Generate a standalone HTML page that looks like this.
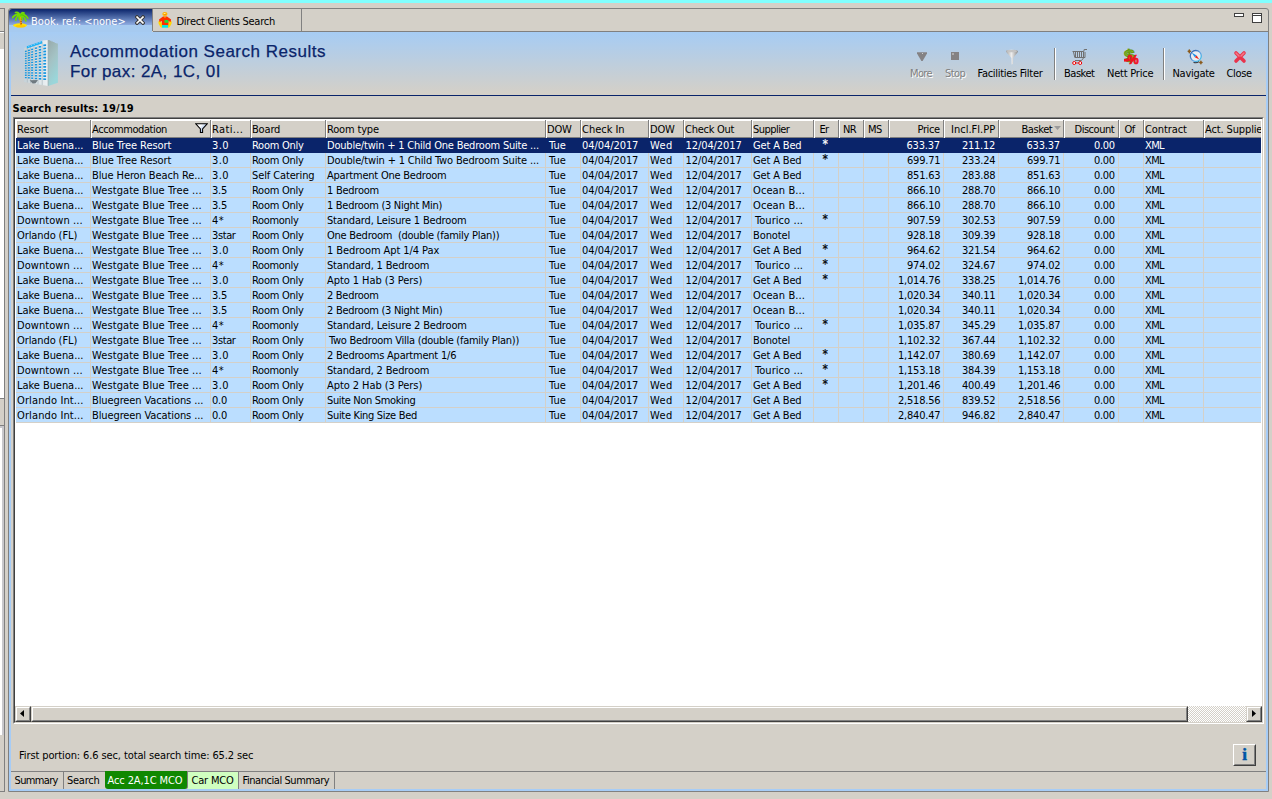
<!DOCTYPE html>
<html><head><meta charset="utf-8"><title>Accommodation Search Results</title>
<style>
*{box-sizing:border-box;margin:0;padding:0}
html,body{width:1272px;height:799px;overflow:hidden;background:#D4D0C8}
body{position:relative;font-family:"DejaVu Sans Condensed","Liberation Sans",sans-serif;font-size:11px;letter-spacing:-0.22px;color:#000;line-height:13px}
.a{position:absolute}
span.a{white-space:nowrap}
#cyan{left:0;top:0;width:1272px;height:3px;background:#80FFFF}
/* left strip */
#ls1{left:0;top:8px;width:5px;height:1px;background:#808080}
#ls2{left:4px;top:8px;width:1px;height:784px;background:#808080}
#ls3{left:0;top:32px;width:4px;height:1px;background:#fff}
#ls0{left:0;top:31px;width:4px;height:1px;background:#808080}
#ls4{left:0;top:49px;width:4px;height:686px;background:#fff}
#ls6{left:0;top:398px;width:4px;height:28px;background:#D4D0C8;border-top:1px solid #808080;border-bottom:1px solid #808080}
#ls7{left:0;top:426px;width:4px;height:2px;background:#C8C8CC}
#ls8{left:2px;top:428px;width:2px;height:307px;background:#C8C8CC}
#ls5{left:0;top:791px;width:5px;height:1px;background:#808080}
/* frame */
#frame{left:8px;top:8px;width:1261px;height:784px;border:1px solid #808080;border-radius:3px 3px 0 0}
#fblue{left:9px;top:32px;width:1259px;height:759px;border:2px solid #A6CCF6;border-top:none}
#tabline{left:9px;top:31px;width:1259px;height:1px;background:#808080}
#tab1{left:9px;top:9px;width:143px;height:23px;background:linear-gradient(#0A246A 0px,#8FADE2 16px,#A6CAF0 16px,#A6CAF0 23px);border-radius:3px 0 0 0}
#tab1r{left:152px;top:9px;width:1px;height:22px;background:#808080}
#tab2r{left:301px;top:9px;width:1px;height:22px;background:#808080}
.tabt{white-space:nowrap}
#hdr{left:11px;top:32px;width:1255px;height:63px;background:linear-gradient(#A6CCF4 0px,#D4D0C8 61px,#D4D0C8 63px)}
#navy{left:11px;top:95px;width:1255px;height:1px;background:#0A246A}
.title{left:70px;font-family:"Liberation Sans",sans-serif;font-size:17px;letter-spacing:0.5px;color:#0A246A;white-space:nowrap;line-height:20px;-webkit-text-stroke:0.25px #0A246A}
.tb{white-space:nowrap;text-align:center}
.dis{color:#808080;text-shadow:1px 1px 0 #fff}
.sep{top:48px;width:2px;height:32px;border-left:1px solid #808080;border-right:1px solid #fff}
/* table */
#tbox{left:13px;top:117px;width:1251px;height:607px;border:1px solid;border-color:#808080 #fff #fff #808080;background:#fff}
#tbox2{left:14px;top:118px;width:1249px;height:605px;border:1px solid;border-color:#404040 #D4D0C8 #D4D0C8 #404040}
#tin{left:15px;top:119px;width:1247px;height:587px;overflow:hidden}
#thead{position:absolute;left:0;top:0;width:1246px;height:19px;background:#D4D0C8}
.hc{position:absolute;top:0;height:19px;background:#D4D0C8;box-shadow:inset 0 1px 0 #fff,inset 1px 0 0 #fff,inset -1px 0 0 #808080,inset 0 -1px 0 #808080,inset 0 2px 0 #fff;overflow:hidden;white-space:nowrap}
.hc.first{box-shadow:inset 0 1px 0 #fff,inset 2px 0 0 #fff,inset -1px 0 0 #808080,inset 0 -1px 0 #808080,inset 0 2px 0 #fff}
.hc.last{box-shadow:inset 0 1px 0 #fff,inset 1px 0 0 #fff,inset 0 -1px 0 #808080,inset 0 2px 0 #fff}
.hc span{position:absolute;white-space:nowrap}
.flt{position:absolute;right:3px;top:4px}
.srt{position:absolute;right:3px;top:7px}
.r{position:absolute;left:1px;width:1245px;height:15px;background:#BBDEFF;border-bottom:1px solid #D4D0C8}
.r.sel{background:#0A246A;color:#fff;border-bottom-color:#0A246A}
.c{position:absolute;top:0;height:14px;border-right:1px solid #D4D0C8;overflow:hidden;white-space:nowrap}
.r.sel .c{border-right-color:#0A246A}
.c.last{border-right:none}
.c .ast{left:8.5px;top:0px;font-size:12px;letter-spacing:0;-webkit-text-stroke:0.2px}
.c span{position:absolute;white-space:nowrap}
/* scrollbar */
#sb{left:15px;top:706px;width:1247px;height:16px;background-color:#D4D0C8;background-image:conic-gradient(#fff 25%,#D4D0C8 0 50%,#fff 0 75%,#D4D0C8 0);background-size:2px 2px}
.btn{background:#D4D0C8;border:1px solid;border-color:#D4D0C8 #404040 #404040 #D4D0C8}
.btn:after{content:"";position:absolute;left:0;top:0;right:0;bottom:0;border:1px solid;border-color:#fff #808080 #808080 #fff}
.btn2{background:#D4D0C8;border:1px solid;border-color:#fff #404040 #404040 #fff}
.btn2:after{content:"";position:absolute;left:0;top:0;right:0;bottom:0;border:1px solid;border-color:transparent #808080 #808080 transparent}
.btab{top:772px;height:17px;white-space:nowrap;line-height:13px;padding-top:3px}
</style></head><body>
<div class="a" id="cyan"></div>
<div class="a" id="ls4"></div><div class="a" id="ls6"></div><div class="a" id="ls7"></div><div class="a" id="ls8"></div><div class="a" id="ls3"></div><div class="a" id="ls0"></div><div class="a" id="ls1"></div><div class="a" id="ls2"></div><div class="a" id="ls5"></div>
<div class="a" id="fblue"></div>
<div class="a" id="hdr"></div>
<div class="a" id="tab1"></div>
<div class="a" id="tabline" style="left:153px;width:1115px"></div>
<div class="a" id="frame"></div>
<div class="a" id="tab1r"></div><div class="a" id="tab2r"></div>
<div class="a" id="navy"></div>
<svg class="a" style="left:20px;top:36px" width="44" height="56" viewBox="0 0 44 56"><defs><linearGradient id="bs" x1="0" y1="0" x2="0.35" y2="1"><stop offset="0" stop-color="#97A9AA"/><stop offset="0.5" stop-color="#A4C2C4"/><stop offset="1" stop-color="#9AD6DA"/></linearGradient><linearGradient id="bf" x1="0" y1="0" x2="1" y2="0"><stop offset="0" stop-color="#C6D2D8"/><stop offset="1" stop-color="#ECF1F3"/></linearGradient></defs><polygon points="28.1,4.0 29.7,4.0 29.7,4.7 31.4,4.7 31.4,5.4 33.0,5.4 33.0,6.1 34.6,6.1 34.6,6.9 36.3,6.9 36.3,7.6 37.9,7.6 37.9,8.3 37.9,46.7 28.1,49.9" fill="url(#bs)"/><polygon points="4.0,12.1 22.5,5.4 22.5,4.4 28.1,4.0 28.1,49.9 4.0,46.0" fill="url(#bf)"/><line x1="28.1" y1="4.0" x2="28.1" y2="49.9" stroke="#8FA4A6" stroke-width="0.7"/><line x1="7.3" y1="11.4" x2="7.3" y2="46.5" stroke="#AAB8BE" stroke-width="0.7"/><line x1="10.5" y1="10.3" x2="10.5" y2="47.0" stroke="#AAB8BE" stroke-width="0.7"/><line x1="14.0" y1="9.0" x2="14.0" y2="47.6" stroke="#AAB8BE" stroke-width="0.7"/><line x1="18.0" y1="7.5" x2="18.0" y2="48.3" stroke="#AAB8BE" stroke-width="0.7"/><line x1="22.2" y1="6.0" x2="22.2" y2="49.0" stroke="#AAB8BE" stroke-width="0.7"/><polygon points="4.9,14.8 6.7,14.6 6.7,16.0 4.9,16.2" fill="#1696E0"/><polygon points="4.9,17.2 6.7,17.0 6.7,18.4 4.9,18.5" fill="#1696E0"/><polygon points="4.9,19.6 6.7,19.4 6.7,20.8 4.9,20.9" fill="#1696E0"/><polygon points="4.9,21.9 6.7,21.8 6.7,23.1 4.9,23.3" fill="#1696E0"/><polygon points="4.9,24.3 6.7,24.2 6.7,25.5 4.9,25.6" fill="#1696E0"/><polygon points="4.9,26.7 6.7,26.6 6.7,27.9 4.9,28.0" fill="#1696E0"/><polygon points="4.9,29.1 6.7,29.0 6.7,30.3 4.9,30.4" fill="#1696E0"/><polygon points="4.9,31.4 6.7,31.4 6.7,32.7 4.9,32.8" fill="#1696E0"/><polygon points="4.9,33.8 6.7,33.8 6.7,35.1 4.9,35.1" fill="#1696E0"/><polygon points="4.9,36.2 6.7,36.2 6.7,37.5 4.9,37.5" fill="#1696E0"/><polygon points="4.9,38.5 6.7,38.6 6.7,39.9 4.9,39.9" fill="#1696E0"/><polygon points="4.9,40.9 6.7,41.0 6.7,42.3 4.9,42.2" fill="#1696E0"/><polygon points="7.9,13.8 9.9,13.6 9.9,15.0 7.9,15.2" fill="#1696E0"/><polygon points="7.9,16.3 9.9,16.1 9.9,17.5 7.9,17.7" fill="#1696E0"/><polygon points="7.9,18.8 9.9,18.6 9.9,20.0 7.9,20.2" fill="#1696E0"/><polygon points="7.9,21.3 9.9,21.1 9.9,22.5 7.9,22.7" fill="#1696E0"/><polygon points="7.9,23.7 9.9,23.6 9.9,25.0 7.9,25.1" fill="#1696E0"/><polygon points="7.9,26.2 9.9,26.1 9.9,27.5 7.9,27.6" fill="#1696E0"/><polygon points="7.9,28.7 9.9,28.6 9.9,30.0 7.9,30.1" fill="#1696E0"/><polygon points="7.9,31.2 9.9,31.2 9.9,32.6 7.9,32.6" fill="#1696E0"/><polygon points="7.9,33.7 9.9,33.7 9.9,35.1 7.9,35.1" fill="#1696E0"/><polygon points="7.9,36.2 9.9,36.2 9.9,37.6 7.9,37.6" fill="#1696E0"/><polygon points="7.9,38.7 9.9,38.7 9.9,40.1 7.9,40.0" fill="#1696E0"/><polygon points="7.9,41.1 9.9,41.2 9.9,42.6 7.9,42.5" fill="#1696E0"/><polygon points="11.1,12.8 13.1,12.5 13.1,14.0 11.1,14.2" fill="#1696E0"/><polygon points="11.1,15.4 13.1,15.1 13.1,16.6 11.1,16.8" fill="#1696E0"/><polygon points="11.1,18.0 13.1,17.8 13.1,19.2 11.1,19.4" fill="#1696E0"/><polygon points="11.1,20.6 13.1,20.4 13.1,21.9 11.1,22.0" fill="#1696E0"/><polygon points="11.1,23.2 13.1,23.0 13.1,24.5 11.1,24.6" fill="#1696E0"/><polygon points="11.1,25.8 13.1,25.7 13.1,27.1 11.1,27.2" fill="#1696E0"/><polygon points="11.1,28.4 13.1,28.3 13.1,29.8 11.1,29.8" fill="#1696E0"/><polygon points="11.1,31.0 13.1,30.9 13.1,32.4 11.1,32.4" fill="#1696E0"/><polygon points="11.1,33.6 13.1,33.5 13.1,35.0 11.1,35.0" fill="#1696E0"/><polygon points="11.1,36.2 13.1,36.2 13.1,37.6 11.1,37.6" fill="#1696E0"/><polygon points="11.1,38.8 13.1,38.8 13.1,40.3 11.1,40.2" fill="#1696E0"/><polygon points="11.1,41.4 13.1,41.4 13.1,42.9 11.1,42.8" fill="#1696E0"/><polygon points="14.9,11.5 17.1,11.2 17.1,12.8 14.9,13.0" fill="#1696E0"/><polygon points="14.9,14.2 17.1,14.0 17.1,15.5 14.9,15.8" fill="#1696E0"/><polygon points="14.9,17.0 17.1,16.8 17.1,18.3 14.9,18.5" fill="#1696E0"/><polygon points="14.9,19.7 17.1,19.5 17.1,21.1 14.9,21.2" fill="#1696E0"/><polygon points="14.9,22.4 17.1,22.3 17.1,23.8 14.9,24.0" fill="#1696E0"/><polygon points="14.9,25.2 17.1,25.1 17.1,26.6 14.9,26.7" fill="#1696E0"/><polygon points="14.9,27.9 17.1,27.9 17.1,29.4 14.9,29.5" fill="#1696E0"/><polygon points="14.9,30.7 17.1,30.6 17.1,32.2 14.9,32.2" fill="#1696E0"/><polygon points="14.9,33.4 17.1,33.4 17.1,34.9 14.9,35.0" fill="#1696E0"/><polygon points="14.9,36.2 17.1,36.2 17.1,37.7 14.9,37.7" fill="#1696E0"/><polygon points="14.9,38.9 17.1,39.0 17.1,40.5 14.9,40.5" fill="#1696E0"/><polygon points="14.9,41.7 17.1,41.7 17.1,43.3 14.9,43.2" fill="#1696E0"/><polygon points="18.8,10.1 21.2,9.9 21.2,11.5 18.8,11.8" fill="#1696E0"/><polygon points="18.8,13.0 21.2,12.8 21.2,14.4 18.8,14.7" fill="#1696E0"/><polygon points="18.8,15.9 21.2,15.7 21.2,17.3 18.8,17.6" fill="#1696E0"/><polygon points="18.8,18.8 21.2,18.6 21.2,20.3 18.8,20.4" fill="#1696E0"/><polygon points="18.8,21.7 21.2,21.6 21.2,23.2 18.8,23.3" fill="#1696E0"/><polygon points="18.8,24.6 21.2,24.5 21.2,26.1 18.8,26.2" fill="#1696E0"/><polygon points="18.8,27.5 21.2,27.4 21.2,29.0 18.8,29.1" fill="#1696E0"/><polygon points="18.8,30.4 21.2,30.3 21.2,32.0 18.8,32.0" fill="#1696E0"/><polygon points="18.8,33.3 21.2,33.3 21.2,34.9 18.8,34.9" fill="#1696E0"/><polygon points="18.8,36.2 21.2,36.2 21.2,37.8 18.8,37.8" fill="#1696E0"/><polygon points="18.8,39.1 21.2,39.1 21.2,40.7 18.8,40.7" fill="#1696E0"/><polygon points="18.8,42.0 21.2,42.0 21.2,43.7 18.8,43.6" fill="#1696E0"/><polygon points="23.3,8.6 26.1,8.3 26.1,10.0 23.3,10.3" fill="#1696E0"/><polygon points="23.3,11.7 26.1,11.4 26.1,13.1 23.3,13.4" fill="#1696E0"/><polygon points="23.3,14.7 26.1,14.5 26.1,16.2 23.3,16.4" fill="#1696E0"/><polygon points="23.3,17.8 26.1,17.6 26.1,19.3 23.3,19.5" fill="#1696E0"/><polygon points="23.3,20.8 26.1,20.7 26.1,22.4 23.3,22.6" fill="#1696E0"/><polygon points="23.3,23.9 26.1,23.8 26.1,25.5 23.3,25.6" fill="#1696E0"/><polygon points="23.3,27.0 26.1,26.9 26.1,28.6 23.3,28.7" fill="#1696E0"/><polygon points="23.3,30.0 26.1,30.0 26.1,31.7 23.3,31.8" fill="#1696E0"/><polygon points="23.3,33.1 26.1,33.1 26.1,34.8 23.3,34.8" fill="#1696E0"/><polygon points="23.3,36.2 26.1,36.2 26.1,37.9 23.3,37.9" fill="#1696E0"/><polygon points="23.3,39.2 26.1,39.3 26.1,41.0 23.3,41.0" fill="#1696E0"/><polygon points="23.3,42.3 26.1,42.4 26.1,44.1 23.3,44.0" fill="#1696E0"/><polygon points="6.8,10.2 22.1,4.9 22.1,7.6 6.8,12.6" fill="#1EB0F4"/><path d="M8.5 10.8l0.8 -1 M11.0 10.0l0.8 -1.1 M13.8 9.0l0.9 -1.2 M16.6 8.0l0.9 -1.2 M19.4 7.1l0.9 -1.3" stroke="#D8F0FC" stroke-width="0.6"/><polygon points="9.6,44.2 17.9,43.9 15.6,47.2 12.6,47.4" fill="#6F7A80"/></svg><svg class="a" style="left:12px;top:11px" width="17" height="17" viewBox="0 0 17 17">
<ellipse cx="8" cy="14.3" rx="7" ry="2" fill="#FFE500"/><ellipse cx="8.5" cy="15.3" rx="5" ry="1.2" fill="#FFC800"/>
<path d="M8.2 5 L8.6 9 L9 14" stroke="#F0A010" stroke-width="2" fill="none"/>
<path d="M8.8 8.2h1.2M8.4 10.5h1.4M8.6 12.6h1.4" stroke="#B85000" stroke-width="0.9"/>
<path d="M8 4.5 C6 2.5 3 3.5 0.5 6.5 M8 4.5 C6 4 4 6 3.8 9.2 M8 4.5 C7 1.5 5 1 3.5 1.5 M8.5 4.5 C9 2 10.5 1.2 12 2 M8.5 4.5 C11 2.5 14 4 15.8 7.2 M8.5 4.5 C11 4.5 13 6.5 13.8 9.8 M8.3 4.5 C9.5 5.5 10.3 7 10.3 8.6 M8 4.5 C7 5.5 7 7 7.2 8" stroke="#74DC00" stroke-width="1.7" fill="none" stroke-linecap="round"/>
<path d="M8.3 4.3 C10 3.6 12 4.6 13 6" stroke="#58C800" stroke-width="1.2" fill="none"/>
</svg><svg class="a" style="left:157px;top:11px" width="17" height="18" viewBox="0 0 17 18">
<ellipse cx="7.9" cy="3" rx="2.6" ry="2.1" fill="#FFB000"/><ellipse cx="7.6" cy="2.6" rx="1.1" ry="0.7" fill="#FFF0A0"/><ellipse cx="8" cy="3.6" rx="1" ry="0.5" fill="#FF8800"/>
<path d="M2.2 9.8 C0.6 11 1.6 14 4.2 16.7 L5.3 16.2 L4.9 12 L3.4 10 Z" fill="#FFD800"/>
<path d="M13.9 9.8 C15.5 11 14.5 14 11.9 16.7 L10.8 16.2 L11.2 12 L12.7 10 Z" fill="#FFD800"/>
<path d="M6 5.4 L10 5.4 L14.1 8.5 L13.6 10.9 L11.5 10 L11.3 14.4 L5 14.4 L4.8 10 L2.6 10.9 L2 8.5 Z" fill="#FF2E00"/>
<path d="M6.9 5.4 L8 7.2 L9.1 5.4" fill="#FFC000"/>
<rect x="7.5" y="9" width="3.8" height="2.8" fill="#20E038"/>
<rect x="5" y="14.1" width="6.1" height="2.6" fill="#00E8E0"/>
</svg><svg class="a" style="left:135px;top:15px" width="10" height="10" viewBox="0 0 10 10">
<path d="M2 2 L8 8 M8 2 L2 8" stroke="#383838" stroke-width="3.6" stroke-linecap="square"/>
<path d="M2.1 2.1 L7.9 7.9 M7.9 2.1 L2.1 7.9" stroke="#fff" stroke-width="1.7" stroke-linecap="square"/>
</svg><svg class="a" style="left:916px;top:51px" width="12" height="11" viewBox="0 0 12 11"><path d="M1 1.2 H11 V2.5 L6.6 10 H5.4 L1 2.5 Z" fill="#848284"/><rect x="6" y="2" width="1" height="1" fill="#D0D0D0"/></svg><svg class="a" style="left:951px;top:52px" width="8" height="8" viewBox="0 0 8 8"><rect width="8" height="8" fill="#848284"/><rect x="1.5" y="1" width="1" height="2" fill="#D8D8D8"/></svg><svg class="a" style="left:1005px;top:49px" width="14" height="16" viewBox="0 0 14 16"><defs><linearGradient id="fg" x1="0" y1="0" x2="1" y2="0"><stop offset="0" stop-color="#A4A4A4"/><stop offset="0.45" stop-color="#EEEEEE"/><stop offset="1" stop-color="#8C8C8C"/></linearGradient></defs>
<path d="M1 2.2 C1 0.4 13 0.4 13 2.2 C13 3.6 9.6 6.6 8.2 9 L8 15 L6.6 15.4 L6.4 9 C5 6.6 1 3.6 1 2.2 Z" fill="url(#fg)"/><ellipse cx="7" cy="2.2" rx="5" ry="1.1" fill="#C4C4C4"/></svg><svg class="a" style="left:1071px;top:48px" width="17" height="18" viewBox="0 0 17 18">
<path d="M1.5 3.5 H12.8 L13.2 1.5 H16" stroke="#707070" stroke-width="1" fill="none"/>
<path d="M2.5 4 L3.8 9.5 H14 M4.5 4 V9 M6.5 4 V9 M8.5 4 V9 M10.5 4 V9 M12.5 4 V9 M14 4 V9.5" stroke="#707070" stroke-width="1" fill="none"/>
<path d="M12.5 10 L10.5 12.5 H4" stroke="#707070" stroke-width="1" fill="none"/>
<circle cx="3.2" cy="15" r="1.5" fill="#fff" stroke="#F00000" stroke-width="1"/><circle cx="9.2" cy="15" r="1.5" fill="#fff" stroke="#F00000" stroke-width="1"/>
<path d="M5 15 H7.5" stroke="#F00000" stroke-width="0.8"/>
</svg><svg class="a" style="left:1122px;top:47px" width="18" height="18" viewBox="0 0 18 18">
<text x="2.2" y="15" font-family="Liberation Sans, sans-serif" font-weight="bold" font-size="17.5" fill="#7FB42C" stroke="#66980F" stroke-width="0.9" transform="rotate(-10 7 9) scale(1.12 1)">$</text>
<rect x="2" y="11.8" width="4.4" height="2.8" fill="#F01020"/>
<text x="5.6" y="16.8" font-family="Liberation Sans, sans-serif" font-weight="bold" font-size="12.5" fill="#F01020" stroke="#F01020" stroke-width="0.7">%</text>
</svg><svg class="a" style="left:1187px;top:48px" width="17" height="17" viewBox="0 0 17 17">
<defs><linearGradient id="cr" x1="0" y1="0" x2="1" y2="1"><stop offset="0" stop-color="#24509C"/><stop offset="0.55" stop-color="#5C9CE0"/><stop offset="1" stop-color="#38D0F0"/></linearGradient></defs>
<path d="M1.2 3.3 H3.4 M2.3 2.1 V4.8 M12.8 14.6 H15 M13.9 13.3 V15.8" stroke="#8A5A1C" stroke-width="1.5" stroke-linecap="round"/>
<path d="M6.5 14.2 A5.8 5.8 0 0 0 12 13.6" stroke="#404048" stroke-width="1.2" fill="none"/>
<circle cx="8.8" cy="8" r="5.5" fill="#E9EDF1" stroke="url(#cr)" stroke-width="1.3"/>
<path d="M4.6 4.4 L9.6 7.4 L7.8 9.2 Z" fill="#1E90E8"/>
<path d="M12.3 11.6 L7.8 9.2 L9.6 7.4 Z" fill="#F02418"/>
</svg><svg class="a" style="left:1233px;top:50px" width="14" height="14" viewBox="0 0 14 14">
<path d="M3 3 L11 11 M11 3 L3 11" stroke="#E8344C" stroke-width="3.6" stroke-linecap="round"/>
<path d="M3 3 L6 6 M11 3 L8 6" stroke="#F47888" stroke-width="1.6" stroke-linecap="round"/>
</svg><svg class="a" style="left:1233px;top:12px" width="30" height="12" viewBox="0 0 30 12">
<rect x="1.5" y="1.5" width="9" height="3" fill="#fff" stroke="#404040" stroke-width="1"/>
<rect x="19.5" y="1.5" width="9" height="9" fill="#fff" stroke="#404040" stroke-width="1"/><rect x="19" y="3" width="10" height="1" fill="#404040"/>
</svg>
<div class="a title" style="top:42px">Accommodation Search Results</div>
<div class="a title" style="top:62px;left:70px;letter-spacing:0.43px">For pax: 2A, 1C, 0I</div>

<div class="a sep" style="left:1054px"></div>
<div class="a sep" style="left:1163px"></div>

<div class="a" id="tbox"></div><div class="a" id="tbox2"></div>
<div class="a" id="tin">
<div id="thead"><div class="hc first" style="left:0px;width:76px"><span style="left:2px;top:4px;letter-spacing:0.01px;">Resort</span></div><div class="hc" style="left:76px;width:120px"><span style="left:1px;top:4px;letter-spacing:-0.40px;">Accommodation</span><svg class="flt" width="13" height="10" viewBox="0 0 13 10"><defs><linearGradient id="fl" x1="0" y1="0" x2="1" y2="0.6"><stop offset="0.4" stop-color="#fff"/><stop offset="1" stop-color="#7FA4DC"/></linearGradient></defs><path d="M0.6 0.7H12.4L7.6 6V9.4H5.4V6Z" fill="url(#fl)" stroke="#000" stroke-width="1.05"/></svg></div><div class="hc" style="left:196px;width:40px"><span style="left:1px;top:4px;letter-spacing:0.35px;">Rati...</span></div><div class="hc" style="left:236px;width:75px"><span style="left:1px;top:4px;letter-spacing:-0.17px;">Board</span></div><div class="hc" style="left:311px;width:220px"><span style="left:1px;top:4px;letter-spacing:-0.17px;">Room type</span></div><div class="hc" style="left:531px;width:35px"><span style="left:1px;top:4px;letter-spacing:-0.20px;">DOW</span></div><div class="hc" style="left:566px;width:68px"><span style="left:1px;top:4px;letter-spacing:-0.02px;">Check In</span></div><div class="hc" style="left:634px;width:35px"><span style="left:1px;top:4px;letter-spacing:-0.20px;">DOW</span></div><div class="hc" style="left:669px;width:68px"><span style="left:1px;top:4px;letter-spacing:-0.27px;">Check Out</span></div><div class="hc" style="left:737px;width:62px"><span style="left:1px;top:4px;letter-spacing:-0.55px;">Supplier</span></div><div class="hc" style="left:799px;width:25px"><span style="left:5.5px;top:4px;letter-spacing:-0.65px;">Er</span></div><div class="hc" style="left:824px;width:25px"><span style="left:4px;top:4px;letter-spacing:-0.65px;">NR</span></div><div class="hc" style="left:849px;width:25px"><span style="left:4px;top:4px;letter-spacing:-0.65px;">MS</span></div><div class="hc" style="left:874px;width:55px"><span style="left:28.5px;top:4px;letter-spacing:-0.38px;">Price</span></div><div class="hc" style="left:929px;width:55px"><span style="left:7px;top:4px;letter-spacing:0.01px;">Incl.Fl.PP</span></div><div class="hc" style="left:984px;width:65px"><span style="left:22.5px;top:4px;letter-spacing:-0.43px;">Basket</span><svg class="srt" width="7" height="4" viewBox="0 0 7 4"><path d="M0 0H7L3.5 4Z" fill="#9A9A9A"/></svg></div><div class="hc" style="left:1049px;width:55px"><span style="left:10.5px;top:4px;letter-spacing:-0.47px;">Discount</span></div><div class="hc" style="left:1104px;width:25px"><span style="left:5.5px;top:4px;letter-spacing:-0.49px;">Of</span></div><div class="hc" style="left:1129px;width:60px"><span style="left:1px;top:4px;letter-spacing:-0.10px;">Contract</span></div><div class="hc last" style="left:1189px;width:57px"><span style="left:1px;top:4px;letter-spacing:-0.13px;">Act. Supplier</span></div></div>
<div class="r sel" style="top:19px"><div class="c" style="left:0px;width:75px"><span style="left:1px;top:1px;letter-spacing:-0.05px;">Lake Buena...</span></div><div class="c" style="left:75px;width:120px"><span style="left:1px;top:1px;letter-spacing:-0.05px;">Blue Tree Resort</span></div><div class="c" style="left:195px;width:40px"><span style="left:1px;top:1px;letter-spacing:0.35px;">3.0</span></div><div class="c" style="left:235px;width:75px"><span style="left:1px;top:1px;letter-spacing:-0.27px;">Room Only</span></div><div class="c" style="left:310px;width:220px"><span style="left:1px;top:1px;letter-spacing:-0.20px;">Double/twin + 1 Child One Bedroom Suite ...</span></div><div class="c" style="left:530px;width:35px"><span style="left:3px;top:1px;letter-spacing:0.08px;">Tue</span></div><div class="c" style="left:565px;width:68px"><span style="left:1px;top:1px;letter-spacing:-0.07px;">04/04/2017</span></div><div class="c" style="left:633px;width:35px"><span style="left:1px;top:1px;letter-spacing:0.35px;">Wed</span></div><div class="c" style="left:668px;width:68px"><span style="left:1.5px;top:1px;letter-spacing:-0.08px;">12/04/2017</span></div><div class="c" style="left:736px;width:62px"><span style="left:1px;top:1px;letter-spacing:-0.15px;">Get A Bed</span></div><div class="c" style="left:798px;width:25px"><span class="ast">*</span></div><div class="c" style="left:823px;width:25px"></div><div class="c" style="left:848px;width:25px"></div><div class="c" style="left:873px;width:55px"><span style="left:17.5px;top:1px;letter-spacing:-0.20px;">633.37</span></div><div class="c" style="left:928px;width:55px"><span style="left:18px;top:1px;letter-spacing:-0.26px;">211.12</span></div><div class="c" style="left:983px;width:65px"><span style="left:27.5px;top:1px;letter-spacing:-0.20px;">633.37</span></div><div class="c" style="left:1048px;width:55px"><span style="left:30px;top:1px;letter-spacing:-0.31px;">0.00</span></div><div class="c" style="left:1103px;width:25px"></div><div class="c" style="left:1128px;width:60px"><span style="left:1px;top:1px;letter-spacing:-0.65px;">XML</span></div><div class="c last" style="left:1188px;width:57px"></div></div>
<div class="r" style="top:34px"><div class="c" style="left:0px;width:75px"><span style="left:1px;top:1px;letter-spacing:-0.05px;">Lake Buena...</span></div><div class="c" style="left:75px;width:120px"><span style="left:1px;top:1px;letter-spacing:-0.05px;">Blue Tree Resort</span></div><div class="c" style="left:195px;width:40px"><span style="left:1px;top:1px;letter-spacing:0.35px;">3.0</span></div><div class="c" style="left:235px;width:75px"><span style="left:1px;top:1px;letter-spacing:-0.27px;">Room Only</span></div><div class="c" style="left:310px;width:220px"><span style="left:1px;top:1px;letter-spacing:-0.16px;">Double/twin + 1 Child Two Bedroom Suite ...</span></div><div class="c" style="left:530px;width:35px"><span style="left:3px;top:1px;letter-spacing:0.08px;">Tue</span></div><div class="c" style="left:565px;width:68px"><span style="left:1px;top:1px;letter-spacing:-0.07px;">04/04/2017</span></div><div class="c" style="left:633px;width:35px"><span style="left:1px;top:1px;letter-spacing:0.35px;">Wed</span></div><div class="c" style="left:668px;width:68px"><span style="left:1.5px;top:1px;letter-spacing:-0.08px;">12/04/2017</span></div><div class="c" style="left:736px;width:62px"><span style="left:1px;top:1px;letter-spacing:-0.15px;">Get A Bed</span></div><div class="c" style="left:798px;width:25px"><span class="ast">*</span></div><div class="c" style="left:823px;width:25px"></div><div class="c" style="left:848px;width:25px"></div><div class="c" style="left:873px;width:55px"><span style="left:18px;top:1px;">699.71</span></div><div class="c" style="left:928px;width:55px"><span style="left:18px;top:1px;">233.24</span></div><div class="c" style="left:983px;width:65px"><span style="left:28px;top:1px;">699.71</span></div><div class="c" style="left:1048px;width:55px"><span style="left:30px;top:1px;letter-spacing:-0.31px;">0.00</span></div><div class="c" style="left:1103px;width:25px"></div><div class="c" style="left:1128px;width:60px"><span style="left:1px;top:1px;letter-spacing:-0.65px;">XML</span></div><div class="c last" style="left:1188px;width:57px"></div></div>
<div class="r" style="top:49px"><div class="c" style="left:0px;width:75px"><span style="left:1px;top:1px;letter-spacing:-0.05px;">Lake Buena...</span></div><div class="c" style="left:75px;width:120px"><span style="left:1px;top:1px;letter-spacing:-0.10px;">Blue Heron Beach Re...</span></div><div class="c" style="left:195px;width:40px"><span style="left:1px;top:1px;letter-spacing:0.35px;">3.0</span></div><div class="c" style="left:235px;width:75px"><span style="left:1px;top:1px;letter-spacing:-0.12px;">Self Catering</span></div><div class="c" style="left:310px;width:220px"><span style="left:1px;top:1px;">Apartment One Bedroom</span></div><div class="c" style="left:530px;width:35px"><span style="left:3px;top:1px;letter-spacing:0.08px;">Tue</span></div><div class="c" style="left:565px;width:68px"><span style="left:1px;top:1px;letter-spacing:-0.07px;">04/04/2017</span></div><div class="c" style="left:633px;width:35px"><span style="left:1px;top:1px;letter-spacing:0.35px;">Wed</span></div><div class="c" style="left:668px;width:68px"><span style="left:1.5px;top:1px;letter-spacing:-0.08px;">12/04/2017</span></div><div class="c" style="left:736px;width:62px"><span style="left:1px;top:1px;letter-spacing:-0.15px;">Get A Bed</span></div><div class="c" style="left:798px;width:25px"></div><div class="c" style="left:823px;width:25px"></div><div class="c" style="left:848px;width:25px"></div><div class="c" style="left:873px;width:55px"><span style="left:18px;top:1px;">851.63</span></div><div class="c" style="left:928px;width:55px"><span style="left:18px;top:1px;">283.88</span></div><div class="c" style="left:983px;width:65px"><span style="left:28px;top:1px;">851.63</span></div><div class="c" style="left:1048px;width:55px"><span style="left:30px;top:1px;letter-spacing:-0.31px;">0.00</span></div><div class="c" style="left:1103px;width:25px"></div><div class="c" style="left:1128px;width:60px"><span style="left:1px;top:1px;letter-spacing:-0.65px;">XML</span></div><div class="c last" style="left:1188px;width:57px"></div></div>
<div class="r" style="top:64px"><div class="c" style="left:0px;width:75px"><span style="left:1px;top:1px;letter-spacing:-0.05px;">Lake Buena...</span></div><div class="c" style="left:75px;width:120px"><span style="left:1px;top:1px;letter-spacing:0.09px;">Westgate Blue Tree ...</span></div><div class="c" style="left:195px;width:40px"><span style="left:1px;top:1px;">3.5</span></div><div class="c" style="left:235px;width:75px"><span style="left:1px;top:1px;letter-spacing:-0.27px;">Room Only</span></div><div class="c" style="left:310px;width:220px"><span style="left:1px;top:1px;letter-spacing:-0.25px;">1 Bedroom</span></div><div class="c" style="left:530px;width:35px"><span style="left:3px;top:1px;letter-spacing:0.08px;">Tue</span></div><div class="c" style="left:565px;width:68px"><span style="left:1px;top:1px;letter-spacing:-0.07px;">04/04/2017</span></div><div class="c" style="left:633px;width:35px"><span style="left:1px;top:1px;letter-spacing:0.35px;">Wed</span></div><div class="c" style="left:668px;width:68px"><span style="left:1.5px;top:1px;letter-spacing:-0.08px;">12/04/2017</span></div><div class="c" style="left:736px;width:62px"><span style="left:1px;top:1px;letter-spacing:0.10px;">Ocean B...</span></div><div class="c" style="left:798px;width:25px"></div><div class="c" style="left:823px;width:25px"></div><div class="c" style="left:848px;width:25px"></div><div class="c" style="left:873px;width:55px"><span style="left:18px;top:1px;">866.10</span></div><div class="c" style="left:928px;width:55px"><span style="left:18px;top:1px;">288.70</span></div><div class="c" style="left:983px;width:65px"><span style="left:28px;top:1px;">866.10</span></div><div class="c" style="left:1048px;width:55px"><span style="left:30px;top:1px;letter-spacing:-0.31px;">0.00</span></div><div class="c" style="left:1103px;width:25px"></div><div class="c" style="left:1128px;width:60px"><span style="left:1px;top:1px;letter-spacing:-0.65px;">XML</span></div><div class="c last" style="left:1188px;width:57px"></div></div>
<div class="r" style="top:79px"><div class="c" style="left:0px;width:75px"><span style="left:1px;top:1px;letter-spacing:-0.05px;">Lake Buena...</span></div><div class="c" style="left:75px;width:120px"><span style="left:1px;top:1px;letter-spacing:0.09px;">Westgate Blue Tree ...</span></div><div class="c" style="left:195px;width:40px"><span style="left:1px;top:1px;">3.5</span></div><div class="c" style="left:235px;width:75px"><span style="left:1px;top:1px;letter-spacing:-0.27px;">Room Only</span></div><div class="c" style="left:310px;width:220px"><span style="left:1px;top:1px;letter-spacing:-0.29px;">1 Bedroom (3 Night Min)</span></div><div class="c" style="left:530px;width:35px"><span style="left:3px;top:1px;letter-spacing:0.08px;">Tue</span></div><div class="c" style="left:565px;width:68px"><span style="left:1px;top:1px;letter-spacing:-0.07px;">04/04/2017</span></div><div class="c" style="left:633px;width:35px"><span style="left:1px;top:1px;letter-spacing:0.35px;">Wed</span></div><div class="c" style="left:668px;width:68px"><span style="left:1.5px;top:1px;letter-spacing:-0.08px;">12/04/2017</span></div><div class="c" style="left:736px;width:62px"><span style="left:1px;top:1px;letter-spacing:0.10px;">Ocean B...</span></div><div class="c" style="left:798px;width:25px"></div><div class="c" style="left:823px;width:25px"></div><div class="c" style="left:848px;width:25px"></div><div class="c" style="left:873px;width:55px"><span style="left:18px;top:1px;">866.10</span></div><div class="c" style="left:928px;width:55px"><span style="left:18px;top:1px;">288.70</span></div><div class="c" style="left:983px;width:65px"><span style="left:28px;top:1px;">866.10</span></div><div class="c" style="left:1048px;width:55px"><span style="left:30px;top:1px;letter-spacing:-0.31px;">0.00</span></div><div class="c" style="left:1103px;width:25px"></div><div class="c" style="left:1128px;width:60px"><span style="left:1px;top:1px;letter-spacing:-0.65px;">XML</span></div><div class="c last" style="left:1188px;width:57px"></div></div>
<div class="r" style="top:94px"><div class="c" style="left:0px;width:75px"><span style="left:1px;top:1px;letter-spacing:0.06px;">Downtown ...</span></div><div class="c" style="left:75px;width:120px"><span style="left:1px;top:1px;letter-spacing:0.09px;">Westgate Blue Tree ...</span></div><div class="c" style="left:195px;width:40px"><span style="left:1px;top:1px;letter-spacing:0.35px;">4*</span></div><div class="c" style="left:235px;width:75px"><span style="left:1px;top:1px;letter-spacing:-0.33px;">Roomonly</span></div><div class="c" style="left:310px;width:220px"><span style="left:1px;top:1px;letter-spacing:-0.17px;">Standard, Leisure 1 Bedroom</span></div><div class="c" style="left:530px;width:35px"><span style="left:3px;top:1px;letter-spacing:0.08px;">Tue</span></div><div class="c" style="left:565px;width:68px"><span style="left:1px;top:1px;letter-spacing:-0.07px;">04/04/2017</span></div><div class="c" style="left:633px;width:35px"><span style="left:1px;top:1px;letter-spacing:0.35px;">Wed</span></div><div class="c" style="left:668px;width:68px"><span style="left:1.5px;top:1px;letter-spacing:-0.08px;">12/04/2017</span></div><div class="c" style="left:736px;width:62px"><span style="left:3px;top:1px;letter-spacing:0.06px;">Tourico ...</span></div><div class="c" style="left:798px;width:25px"><span class="ast">*</span></div><div class="c" style="left:823px;width:25px"></div><div class="c" style="left:848px;width:25px"></div><div class="c" style="left:873px;width:55px"><span style="left:18px;top:1px;">907.59</span></div><div class="c" style="left:928px;width:55px"><span style="left:18px;top:1px;">302.53</span></div><div class="c" style="left:983px;width:65px"><span style="left:28px;top:1px;">907.59</span></div><div class="c" style="left:1048px;width:55px"><span style="left:30px;top:1px;letter-spacing:-0.31px;">0.00</span></div><div class="c" style="left:1103px;width:25px"></div><div class="c" style="left:1128px;width:60px"><span style="left:1px;top:1px;letter-spacing:-0.65px;">XML</span></div><div class="c last" style="left:1188px;width:57px"></div></div>
<div class="r" style="top:109px"><div class="c" style="left:0px;width:75px"><span style="left:1px;top:1px;letter-spacing:-0.10px;">Orlando (FL)</span></div><div class="c" style="left:75px;width:120px"><span style="left:1px;top:1px;letter-spacing:0.09px;">Westgate Blue Tree ...</span></div><div class="c" style="left:195px;width:40px"><span style="left:1px;top:1px;letter-spacing:-0.40px;">3star</span></div><div class="c" style="left:235px;width:75px"><span style="left:1px;top:1px;letter-spacing:-0.27px;">Room Only</span></div><div class="c" style="left:310px;width:220px"><span style="left:1px;top:1px;letter-spacing:-0.26px;">One Bedroom &nbsp;(double (family Plan))</span></div><div class="c" style="left:530px;width:35px"><span style="left:3px;top:1px;letter-spacing:0.08px;">Tue</span></div><div class="c" style="left:565px;width:68px"><span style="left:1px;top:1px;letter-spacing:-0.07px;">04/04/2017</span></div><div class="c" style="left:633px;width:35px"><span style="left:1px;top:1px;letter-spacing:0.35px;">Wed</span></div><div class="c" style="left:668px;width:68px"><span style="left:1.5px;top:1px;letter-spacing:-0.08px;">12/04/2017</span></div><div class="c" style="left:736px;width:62px"><span style="left:1px;top:1px;letter-spacing:-0.09px;">Bonotel</span></div><div class="c" style="left:798px;width:25px"></div><div class="c" style="left:823px;width:25px"></div><div class="c" style="left:848px;width:25px"></div><div class="c" style="left:873px;width:55px"><span style="left:18px;top:1px;">928.18</span></div><div class="c" style="left:928px;width:55px"><span style="left:18px;top:1px;">309.39</span></div><div class="c" style="left:983px;width:65px"><span style="left:28px;top:1px;">928.18</span></div><div class="c" style="left:1048px;width:55px"><span style="left:30px;top:1px;letter-spacing:-0.31px;">0.00</span></div><div class="c" style="left:1103px;width:25px"></div><div class="c" style="left:1128px;width:60px"><span style="left:1px;top:1px;letter-spacing:-0.65px;">XML</span></div><div class="c last" style="left:1188px;width:57px"></div></div>
<div class="r" style="top:124px"><div class="c" style="left:0px;width:75px"><span style="left:1px;top:1px;letter-spacing:-0.05px;">Lake Buena...</span></div><div class="c" style="left:75px;width:120px"><span style="left:1px;top:1px;letter-spacing:0.09px;">Westgate Blue Tree ...</span></div><div class="c" style="left:195px;width:40px"><span style="left:1px;top:1px;letter-spacing:0.35px;">3.0</span></div><div class="c" style="left:235px;width:75px"><span style="left:1px;top:1px;letter-spacing:-0.27px;">Room Only</span></div><div class="c" style="left:310px;width:220px"><span style="left:1px;top:1px;letter-spacing:-0.08px;">1 Bedroom Apt 1/4 Pax</span></div><div class="c" style="left:530px;width:35px"><span style="left:3px;top:1px;letter-spacing:0.08px;">Tue</span></div><div class="c" style="left:565px;width:68px"><span style="left:1px;top:1px;letter-spacing:-0.07px;">04/04/2017</span></div><div class="c" style="left:633px;width:35px"><span style="left:1px;top:1px;letter-spacing:0.35px;">Wed</span></div><div class="c" style="left:668px;width:68px"><span style="left:1.5px;top:1px;letter-spacing:-0.08px;">12/04/2017</span></div><div class="c" style="left:736px;width:62px"><span style="left:1px;top:1px;letter-spacing:-0.15px;">Get A Bed</span></div><div class="c" style="left:798px;width:25px"><span class="ast">*</span></div><div class="c" style="left:823px;width:25px"></div><div class="c" style="left:848px;width:25px"></div><div class="c" style="left:873px;width:55px"><span style="left:18px;top:1px;">964.62</span></div><div class="c" style="left:928px;width:55px"><span style="left:18px;top:1px;">321.54</span></div><div class="c" style="left:983px;width:65px"><span style="left:28px;top:1px;">964.62</span></div><div class="c" style="left:1048px;width:55px"><span style="left:30px;top:1px;letter-spacing:-0.31px;">0.00</span></div><div class="c" style="left:1103px;width:25px"></div><div class="c" style="left:1128px;width:60px"><span style="left:1px;top:1px;letter-spacing:-0.65px;">XML</span></div><div class="c last" style="left:1188px;width:57px"></div></div>
<div class="r" style="top:139px"><div class="c" style="left:0px;width:75px"><span style="left:1px;top:1px;letter-spacing:0.06px;">Downtown ...</span></div><div class="c" style="left:75px;width:120px"><span style="left:1px;top:1px;letter-spacing:0.09px;">Westgate Blue Tree ...</span></div><div class="c" style="left:195px;width:40px"><span style="left:1px;top:1px;letter-spacing:0.35px;">4*</span></div><div class="c" style="left:235px;width:75px"><span style="left:1px;top:1px;letter-spacing:-0.33px;">Roomonly</span></div><div class="c" style="left:310px;width:220px"><span style="left:1px;top:1px;letter-spacing:-0.17px;">Standard, 1 Bedroom</span></div><div class="c" style="left:530px;width:35px"><span style="left:3px;top:1px;letter-spacing:0.08px;">Tue</span></div><div class="c" style="left:565px;width:68px"><span style="left:1px;top:1px;letter-spacing:-0.07px;">04/04/2017</span></div><div class="c" style="left:633px;width:35px"><span style="left:1px;top:1px;letter-spacing:0.35px;">Wed</span></div><div class="c" style="left:668px;width:68px"><span style="left:1.5px;top:1px;letter-spacing:-0.08px;">12/04/2017</span></div><div class="c" style="left:736px;width:62px"><span style="left:3px;top:1px;letter-spacing:0.06px;">Tourico ...</span></div><div class="c" style="left:798px;width:25px"><span class="ast">*</span></div><div class="c" style="left:823px;width:25px"></div><div class="c" style="left:848px;width:25px"></div><div class="c" style="left:873px;width:55px"><span style="left:18px;top:1px;">974.02</span></div><div class="c" style="left:928px;width:55px"><span style="left:18px;top:1px;">324.67</span></div><div class="c" style="left:983px;width:65px"><span style="left:28px;top:1px;">974.02</span></div><div class="c" style="left:1048px;width:55px"><span style="left:30px;top:1px;letter-spacing:-0.31px;">0.00</span></div><div class="c" style="left:1103px;width:25px"></div><div class="c" style="left:1128px;width:60px"><span style="left:1px;top:1px;letter-spacing:-0.65px;">XML</span></div><div class="c last" style="left:1188px;width:57px"></div></div>
<div class="r" style="top:154px"><div class="c" style="left:0px;width:75px"><span style="left:1px;top:1px;letter-spacing:-0.05px;">Lake Buena...</span></div><div class="c" style="left:75px;width:120px"><span style="left:1px;top:1px;letter-spacing:0.09px;">Westgate Blue Tree ...</span></div><div class="c" style="left:195px;width:40px"><span style="left:1px;top:1px;letter-spacing:0.35px;">3.0</span></div><div class="c" style="left:235px;width:75px"><span style="left:1px;top:1px;letter-spacing:-0.27px;">Room Only</span></div><div class="c" style="left:310px;width:220px"><span style="left:1px;top:1px;letter-spacing:-0.07px;">Apto 1 Hab (3 Pers)</span></div><div class="c" style="left:530px;width:35px"><span style="left:3px;top:1px;letter-spacing:0.08px;">Tue</span></div><div class="c" style="left:565px;width:68px"><span style="left:1px;top:1px;letter-spacing:-0.07px;">04/04/2017</span></div><div class="c" style="left:633px;width:35px"><span style="left:1px;top:1px;letter-spacing:0.35px;">Wed</span></div><div class="c" style="left:668px;width:68px"><span style="left:1.5px;top:1px;letter-spacing:-0.08px;">12/04/2017</span></div><div class="c" style="left:736px;width:62px"><span style="left:1px;top:1px;letter-spacing:-0.15px;">Get A Bed</span></div><div class="c" style="left:798px;width:25px"><span class="ast">*</span></div><div class="c" style="left:823px;width:25px"></div><div class="c" style="left:848px;width:25px"></div><div class="c" style="left:873px;width:55px"><span style="left:9px;top:1px;">1,014.76</span></div><div class="c" style="left:928px;width:55px"><span style="left:18px;top:1px;">338.25</span></div><div class="c" style="left:983px;width:65px"><span style="left:19px;top:1px;">1,014.76</span></div><div class="c" style="left:1048px;width:55px"><span style="left:30px;top:1px;letter-spacing:-0.31px;">0.00</span></div><div class="c" style="left:1103px;width:25px"></div><div class="c" style="left:1128px;width:60px"><span style="left:1px;top:1px;letter-spacing:-0.65px;">XML</span></div><div class="c last" style="left:1188px;width:57px"></div></div>
<div class="r" style="top:169px"><div class="c" style="left:0px;width:75px"><span style="left:1px;top:1px;letter-spacing:-0.05px;">Lake Buena...</span></div><div class="c" style="left:75px;width:120px"><span style="left:1px;top:1px;letter-spacing:0.09px;">Westgate Blue Tree ...</span></div><div class="c" style="left:195px;width:40px"><span style="left:1px;top:1px;">3.5</span></div><div class="c" style="left:235px;width:75px"><span style="left:1px;top:1px;letter-spacing:-0.27px;">Room Only</span></div><div class="c" style="left:310px;width:220px"><span style="left:1px;top:1px;letter-spacing:-0.29px;">2 Bedroom</span></div><div class="c" style="left:530px;width:35px"><span style="left:3px;top:1px;letter-spacing:0.08px;">Tue</span></div><div class="c" style="left:565px;width:68px"><span style="left:1px;top:1px;letter-spacing:-0.07px;">04/04/2017</span></div><div class="c" style="left:633px;width:35px"><span style="left:1px;top:1px;letter-spacing:0.35px;">Wed</span></div><div class="c" style="left:668px;width:68px"><span style="left:1.5px;top:1px;letter-spacing:-0.08px;">12/04/2017</span></div><div class="c" style="left:736px;width:62px"><span style="left:1px;top:1px;letter-spacing:0.10px;">Ocean B...</span></div><div class="c" style="left:798px;width:25px"></div><div class="c" style="left:823px;width:25px"></div><div class="c" style="left:848px;width:25px"></div><div class="c" style="left:873px;width:55px"><span style="left:9px;top:1px;">1,020.34</span></div><div class="c" style="left:928px;width:55px"><span style="left:18px;top:1px;">340.11</span></div><div class="c" style="left:983px;width:65px"><span style="left:19px;top:1px;">1,020.34</span></div><div class="c" style="left:1048px;width:55px"><span style="left:30px;top:1px;letter-spacing:-0.31px;">0.00</span></div><div class="c" style="left:1103px;width:25px"></div><div class="c" style="left:1128px;width:60px"><span style="left:1px;top:1px;letter-spacing:-0.65px;">XML</span></div><div class="c last" style="left:1188px;width:57px"></div></div>
<div class="r" style="top:184px"><div class="c" style="left:0px;width:75px"><span style="left:1px;top:1px;letter-spacing:-0.05px;">Lake Buena...</span></div><div class="c" style="left:75px;width:120px"><span style="left:1px;top:1px;letter-spacing:0.09px;">Westgate Blue Tree ...</span></div><div class="c" style="left:195px;width:40px"><span style="left:1px;top:1px;">3.5</span></div><div class="c" style="left:235px;width:75px"><span style="left:1px;top:1px;letter-spacing:-0.27px;">Room Only</span></div><div class="c" style="left:310px;width:220px"><span style="left:1px;top:1px;letter-spacing:-0.28px;">2 Bedroom (3 Night Min)</span></div><div class="c" style="left:530px;width:35px"><span style="left:3px;top:1px;letter-spacing:0.08px;">Tue</span></div><div class="c" style="left:565px;width:68px"><span style="left:1px;top:1px;letter-spacing:-0.07px;">04/04/2017</span></div><div class="c" style="left:633px;width:35px"><span style="left:1px;top:1px;letter-spacing:0.35px;">Wed</span></div><div class="c" style="left:668px;width:68px"><span style="left:1.5px;top:1px;letter-spacing:-0.08px;">12/04/2017</span></div><div class="c" style="left:736px;width:62px"><span style="left:1px;top:1px;letter-spacing:0.10px;">Ocean B...</span></div><div class="c" style="left:798px;width:25px"></div><div class="c" style="left:823px;width:25px"></div><div class="c" style="left:848px;width:25px"></div><div class="c" style="left:873px;width:55px"><span style="left:9px;top:1px;">1,020.34</span></div><div class="c" style="left:928px;width:55px"><span style="left:18px;top:1px;">340.11</span></div><div class="c" style="left:983px;width:65px"><span style="left:19px;top:1px;">1,020.34</span></div><div class="c" style="left:1048px;width:55px"><span style="left:30px;top:1px;letter-spacing:-0.31px;">0.00</span></div><div class="c" style="left:1103px;width:25px"></div><div class="c" style="left:1128px;width:60px"><span style="left:1px;top:1px;letter-spacing:-0.65px;">XML</span></div><div class="c last" style="left:1188px;width:57px"></div></div>
<div class="r" style="top:199px"><div class="c" style="left:0px;width:75px"><span style="left:1px;top:1px;letter-spacing:0.06px;">Downtown ...</span></div><div class="c" style="left:75px;width:120px"><span style="left:1px;top:1px;letter-spacing:0.09px;">Westgate Blue Tree ...</span></div><div class="c" style="left:195px;width:40px"><span style="left:1px;top:1px;letter-spacing:0.35px;">4*</span></div><div class="c" style="left:235px;width:75px"><span style="left:1px;top:1px;letter-spacing:-0.33px;">Roomonly</span></div><div class="c" style="left:310px;width:220px"><span style="left:1px;top:1px;letter-spacing:-0.16px;">Standard, Leisure 2 Bedroom</span></div><div class="c" style="left:530px;width:35px"><span style="left:3px;top:1px;letter-spacing:0.08px;">Tue</span></div><div class="c" style="left:565px;width:68px"><span style="left:1px;top:1px;letter-spacing:-0.07px;">04/04/2017</span></div><div class="c" style="left:633px;width:35px"><span style="left:1px;top:1px;letter-spacing:0.35px;">Wed</span></div><div class="c" style="left:668px;width:68px"><span style="left:1.5px;top:1px;letter-spacing:-0.08px;">12/04/2017</span></div><div class="c" style="left:736px;width:62px"><span style="left:3px;top:1px;letter-spacing:0.06px;">Tourico ...</span></div><div class="c" style="left:798px;width:25px"><span class="ast">*</span></div><div class="c" style="left:823px;width:25px"></div><div class="c" style="left:848px;width:25px"></div><div class="c" style="left:873px;width:55px"><span style="left:9px;top:1px;">1,035.87</span></div><div class="c" style="left:928px;width:55px"><span style="left:18px;top:1px;">345.29</span></div><div class="c" style="left:983px;width:65px"><span style="left:19px;top:1px;">1,035.87</span></div><div class="c" style="left:1048px;width:55px"><span style="left:30px;top:1px;letter-spacing:-0.31px;">0.00</span></div><div class="c" style="left:1103px;width:25px"></div><div class="c" style="left:1128px;width:60px"><span style="left:1px;top:1px;letter-spacing:-0.65px;">XML</span></div><div class="c last" style="left:1188px;width:57px"></div></div>
<div class="r" style="top:214px"><div class="c" style="left:0px;width:75px"><span style="left:1px;top:1px;letter-spacing:-0.10px;">Orlando (FL)</span></div><div class="c" style="left:75px;width:120px"><span style="left:1px;top:1px;letter-spacing:0.09px;">Westgate Blue Tree ...</span></div><div class="c" style="left:195px;width:40px"><span style="left:1px;top:1px;letter-spacing:-0.40px;">3star</span></div><div class="c" style="left:235px;width:75px"><span style="left:1px;top:1px;letter-spacing:-0.27px;">Room Only</span></div><div class="c" style="left:310px;width:220px"><span style="left:3px;top:1px;letter-spacing:-0.26px;">Two Bedroom Villa (double (family Plan))</span></div><div class="c" style="left:530px;width:35px"><span style="left:3px;top:1px;letter-spacing:0.08px;">Tue</span></div><div class="c" style="left:565px;width:68px"><span style="left:1px;top:1px;letter-spacing:-0.07px;">04/04/2017</span></div><div class="c" style="left:633px;width:35px"><span style="left:1px;top:1px;letter-spacing:0.35px;">Wed</span></div><div class="c" style="left:668px;width:68px"><span style="left:1.5px;top:1px;letter-spacing:-0.08px;">12/04/2017</span></div><div class="c" style="left:736px;width:62px"><span style="left:1px;top:1px;letter-spacing:-0.09px;">Bonotel</span></div><div class="c" style="left:798px;width:25px"></div><div class="c" style="left:823px;width:25px"></div><div class="c" style="left:848px;width:25px"></div><div class="c" style="left:873px;width:55px"><span style="left:9px;top:1px;">1,102.32</span></div><div class="c" style="left:928px;width:55px"><span style="left:18px;top:1px;">367.44</span></div><div class="c" style="left:983px;width:65px"><span style="left:19px;top:1px;">1,102.32</span></div><div class="c" style="left:1048px;width:55px"><span style="left:30px;top:1px;letter-spacing:-0.31px;">0.00</span></div><div class="c" style="left:1103px;width:25px"></div><div class="c" style="left:1128px;width:60px"><span style="left:1px;top:1px;letter-spacing:-0.65px;">XML</span></div><div class="c last" style="left:1188px;width:57px"></div></div>
<div class="r" style="top:229px"><div class="c" style="left:0px;width:75px"><span style="left:1px;top:1px;letter-spacing:-0.05px;">Lake Buena...</span></div><div class="c" style="left:75px;width:120px"><span style="left:1px;top:1px;letter-spacing:0.09px;">Westgate Blue Tree ...</span></div><div class="c" style="left:195px;width:40px"><span style="left:1px;top:1px;letter-spacing:0.35px;">3.0</span></div><div class="c" style="left:235px;width:75px"><span style="left:1px;top:1px;letter-spacing:-0.27px;">Room Only</span></div><div class="c" style="left:310px;width:220px"><span style="left:1px;top:1px;">2 Bedrooms Apartment 1/6</span></div><div class="c" style="left:530px;width:35px"><span style="left:3px;top:1px;letter-spacing:0.08px;">Tue</span></div><div class="c" style="left:565px;width:68px"><span style="left:1px;top:1px;letter-spacing:-0.07px;">04/04/2017</span></div><div class="c" style="left:633px;width:35px"><span style="left:1px;top:1px;letter-spacing:0.35px;">Wed</span></div><div class="c" style="left:668px;width:68px"><span style="left:1.5px;top:1px;letter-spacing:-0.08px;">12/04/2017</span></div><div class="c" style="left:736px;width:62px"><span style="left:1px;top:1px;letter-spacing:-0.15px;">Get A Bed</span></div><div class="c" style="left:798px;width:25px"><span class="ast">*</span></div><div class="c" style="left:823px;width:25px"></div><div class="c" style="left:848px;width:25px"></div><div class="c" style="left:873px;width:55px"><span style="left:9px;top:1px;">1,142.07</span></div><div class="c" style="left:928px;width:55px"><span style="left:18px;top:1px;">380.69</span></div><div class="c" style="left:983px;width:65px"><span style="left:19px;top:1px;">1,142.07</span></div><div class="c" style="left:1048px;width:55px"><span style="left:30px;top:1px;letter-spacing:-0.31px;">0.00</span></div><div class="c" style="left:1103px;width:25px"></div><div class="c" style="left:1128px;width:60px"><span style="left:1px;top:1px;letter-spacing:-0.65px;">XML</span></div><div class="c last" style="left:1188px;width:57px"></div></div>
<div class="r" style="top:244px"><div class="c" style="left:0px;width:75px"><span style="left:1px;top:1px;letter-spacing:0.06px;">Downtown ...</span></div><div class="c" style="left:75px;width:120px"><span style="left:1px;top:1px;letter-spacing:0.09px;">Westgate Blue Tree ...</span></div><div class="c" style="left:195px;width:40px"><span style="left:1px;top:1px;letter-spacing:0.35px;">4*</span></div><div class="c" style="left:235px;width:75px"><span style="left:1px;top:1px;letter-spacing:-0.33px;">Roomonly</span></div><div class="c" style="left:310px;width:220px"><span style="left:1px;top:1px;letter-spacing:-0.17px;">Standard, 2 Bedroom</span></div><div class="c" style="left:530px;width:35px"><span style="left:3px;top:1px;letter-spacing:0.08px;">Tue</span></div><div class="c" style="left:565px;width:68px"><span style="left:1px;top:1px;letter-spacing:-0.07px;">04/04/2017</span></div><div class="c" style="left:633px;width:35px"><span style="left:1px;top:1px;letter-spacing:0.35px;">Wed</span></div><div class="c" style="left:668px;width:68px"><span style="left:1.5px;top:1px;letter-spacing:-0.08px;">12/04/2017</span></div><div class="c" style="left:736px;width:62px"><span style="left:3px;top:1px;letter-spacing:0.06px;">Tourico ...</span></div><div class="c" style="left:798px;width:25px"><span class="ast">*</span></div><div class="c" style="left:823px;width:25px"></div><div class="c" style="left:848px;width:25px"></div><div class="c" style="left:873px;width:55px"><span style="left:9px;top:1px;">1,153.18</span></div><div class="c" style="left:928px;width:55px"><span style="left:18px;top:1px;">384.39</span></div><div class="c" style="left:983px;width:65px"><span style="left:19px;top:1px;">1,153.18</span></div><div class="c" style="left:1048px;width:55px"><span style="left:30px;top:1px;letter-spacing:-0.31px;">0.00</span></div><div class="c" style="left:1103px;width:25px"></div><div class="c" style="left:1128px;width:60px"><span style="left:1px;top:1px;letter-spacing:-0.65px;">XML</span></div><div class="c last" style="left:1188px;width:57px"></div></div>
<div class="r" style="top:259px"><div class="c" style="left:0px;width:75px"><span style="left:1px;top:1px;letter-spacing:-0.05px;">Lake Buena...</span></div><div class="c" style="left:75px;width:120px"><span style="left:1px;top:1px;letter-spacing:0.09px;">Westgate Blue Tree ...</span></div><div class="c" style="left:195px;width:40px"><span style="left:1px;top:1px;letter-spacing:0.35px;">3.0</span></div><div class="c" style="left:235px;width:75px"><span style="left:1px;top:1px;letter-spacing:-0.27px;">Room Only</span></div><div class="c" style="left:310px;width:220px"><span style="left:1px;top:1px;letter-spacing:-0.07px;">Apto 2 Hab (3 Pers)</span></div><div class="c" style="left:530px;width:35px"><span style="left:3px;top:1px;letter-spacing:0.08px;">Tue</span></div><div class="c" style="left:565px;width:68px"><span style="left:1px;top:1px;letter-spacing:-0.07px;">04/04/2017</span></div><div class="c" style="left:633px;width:35px"><span style="left:1px;top:1px;letter-spacing:0.35px;">Wed</span></div><div class="c" style="left:668px;width:68px"><span style="left:1.5px;top:1px;letter-spacing:-0.08px;">12/04/2017</span></div><div class="c" style="left:736px;width:62px"><span style="left:1px;top:1px;letter-spacing:-0.15px;">Get A Bed</span></div><div class="c" style="left:798px;width:25px"><span class="ast">*</span></div><div class="c" style="left:823px;width:25px"></div><div class="c" style="left:848px;width:25px"></div><div class="c" style="left:873px;width:55px"><span style="left:9px;top:1px;">1,201.46</span></div><div class="c" style="left:928px;width:55px"><span style="left:18px;top:1px;">400.49</span></div><div class="c" style="left:983px;width:65px"><span style="left:19px;top:1px;">1,201.46</span></div><div class="c" style="left:1048px;width:55px"><span style="left:30px;top:1px;letter-spacing:-0.31px;">0.00</span></div><div class="c" style="left:1103px;width:25px"></div><div class="c" style="left:1128px;width:60px"><span style="left:1px;top:1px;letter-spacing:-0.65px;">XML</span></div><div class="c last" style="left:1188px;width:57px"></div></div>
<div class="r" style="top:274px"><div class="c" style="left:0px;width:75px"><span style="left:1px;top:1px;letter-spacing:0.12px;">Orlando Int...</span></div><div class="c" style="left:75px;width:120px"><span style="left:1px;top:1px;letter-spacing:-0.11px;">Bluegreen Vacations ...</span></div><div class="c" style="left:195px;width:40px"><span style="left:1px;top:1px;">0.0</span></div><div class="c" style="left:235px;width:75px"><span style="left:1px;top:1px;letter-spacing:-0.27px;">Room Only</span></div><div class="c" style="left:310px;width:220px"><span style="left:1px;top:1px;letter-spacing:-0.35px;">Suite Non Smoking</span></div><div class="c" style="left:530px;width:35px"><span style="left:3px;top:1px;letter-spacing:0.08px;">Tue</span></div><div class="c" style="left:565px;width:68px"><span style="left:1px;top:1px;letter-spacing:-0.07px;">04/04/2017</span></div><div class="c" style="left:633px;width:35px"><span style="left:1px;top:1px;letter-spacing:0.35px;">Wed</span></div><div class="c" style="left:668px;width:68px"><span style="left:1.5px;top:1px;letter-spacing:-0.08px;">12/04/2017</span></div><div class="c" style="left:736px;width:62px"><span style="left:1px;top:1px;letter-spacing:-0.15px;">Get A Bed</span></div><div class="c" style="left:798px;width:25px"></div><div class="c" style="left:823px;width:25px"></div><div class="c" style="left:848px;width:25px"></div><div class="c" style="left:873px;width:55px"><span style="left:9px;top:1px;">2,518.56</span></div><div class="c" style="left:928px;width:55px"><span style="left:18px;top:1px;">839.52</span></div><div class="c" style="left:983px;width:65px"><span style="left:19px;top:1px;">2,518.56</span></div><div class="c" style="left:1048px;width:55px"><span style="left:30px;top:1px;letter-spacing:-0.31px;">0.00</span></div><div class="c" style="left:1103px;width:25px"></div><div class="c" style="left:1128px;width:60px"><span style="left:1px;top:1px;letter-spacing:-0.65px;">XML</span></div><div class="c last" style="left:1188px;width:57px"></div></div>
<div class="r" style="top:289px"><div class="c" style="left:0px;width:75px"><span style="left:1px;top:1px;letter-spacing:0.12px;">Orlando Int...</span></div><div class="c" style="left:75px;width:120px"><span style="left:1px;top:1px;letter-spacing:-0.11px;">Bluegreen Vacations ...</span></div><div class="c" style="left:195px;width:40px"><span style="left:1px;top:1px;">0.0</span></div><div class="c" style="left:235px;width:75px"><span style="left:1px;top:1px;letter-spacing:-0.27px;">Room Only</span></div><div class="c" style="left:310px;width:220px"><span style="left:1px;top:1px;letter-spacing:-0.32px;">Suite King Size Bed</span></div><div class="c" style="left:530px;width:35px"><span style="left:3px;top:1px;letter-spacing:0.08px;">Tue</span></div><div class="c" style="left:565px;width:68px"><span style="left:1px;top:1px;letter-spacing:-0.07px;">04/04/2017</span></div><div class="c" style="left:633px;width:35px"><span style="left:1px;top:1px;letter-spacing:0.35px;">Wed</span></div><div class="c" style="left:668px;width:68px"><span style="left:1.5px;top:1px;letter-spacing:-0.08px;">12/04/2017</span></div><div class="c" style="left:736px;width:62px"><span style="left:1px;top:1px;letter-spacing:-0.15px;">Get A Bed</span></div><div class="c" style="left:798px;width:25px"></div><div class="c" style="left:823px;width:25px"></div><div class="c" style="left:848px;width:25px"></div><div class="c" style="left:873px;width:55px"><span style="left:9px;top:1px;">2,840.47</span></div><div class="c" style="left:928px;width:55px"><span style="left:18px;top:1px;">946.82</span></div><div class="c" style="left:983px;width:65px"><span style="left:19px;top:1px;">2,840.47</span></div><div class="c" style="left:1048px;width:55px"><span style="left:30px;top:1px;letter-spacing:-0.31px;">0.00</span></div><div class="c" style="left:1103px;width:25px"></div><div class="c" style="left:1128px;width:60px"><span style="left:1px;top:1px;letter-spacing:-0.65px;">XML</span></div><div class="c last" style="left:1188px;width:57px"></div></div>
</div>
<div class="a" id="sb"></div>
<div class="a btn" style="left:15px;top:706px;width:16px;height:16px"><svg class="a" style="left:4px;top:3px" width="4" height="7" viewBox="0 0 4 7"><path d="M4 0V7L0 3.5Z" fill="#000"/></svg></div>
<div class="a btn" style="left:31px;top:706px;width:1157px;height:16px"></div>
<div class="a btn" style="left:1246px;top:706px;width:16px;height:16px"><svg class="a" style="left:5px;top:3px" width="4" height="7" viewBox="0 0 4 7"><path d="M0 0V7L4 3.5Z" fill="#000"/></svg></div>

<div class="a btn2" style="left:1233px;top:744px;width:23px;height:22px"><span class="a" style="left:0;width:21px;top:0px;text-align:center;font-family:'Liberation Serif',serif;font-weight:bold;font-size:17px;line-height:20px;color:#0054A6;letter-spacing:0;-webkit-text-stroke:0.5px #0054A6">i</span></div>

<div class="a" style="left:11px;top:771px;width:1255px;height:1px;background:#808080"></div>
<div class="a btab" style="left:11px;width:53px;border-right:1px solid #808080;padding-left:3px"></div>
<div class="a btab" style="left:64px;width:41px;padding-left:3px"></div>
<div class="a btab" style="left:105px;top:771px;height:18px;width:83px;background:#108800;border-radius:0 0 3px 3px;border-right:1px solid #808080"></div>
<div class="a btab" style="left:188px;width:51px;background:#D0FFC0;border-right:1px solid #808080;padding-left:4px"></div>
<div class="a btab" style="left:239px;width:96px;border-right:1px solid #808080;padding-left:4px"></div>
<span class="a" style="left:31px;top:15px;letter-spacing:0.02px;color:#fff">Book. ref.: &lt;none&gt;</span>
<span class="a" style="left:176.5px;top:15px;letter-spacing:-0.25px;">Direct Clients Search</span>
<span class="a" style="left:12.5px;top:102px;letter-spacing:0.11px;font-weight:bold">Search results: 19/19</span>
<span class="a" style="left:19px;top:749px;letter-spacing:-0.11px;">First portion: 6.6 sec, total search time: 65.2 sec</span>
<span class="a dis" style="left:910px;top:67px;letter-spacing:-0.61px;">More</span>
<span class="a dis" style="left:945px;top:67px;letter-spacing:-0.57px;">Stop</span>
<span class="a" style="left:977.5px;top:67px;letter-spacing:-0.29px;">Facilities Filter</span>
<span class="a" style="left:1064px;top:67px;letter-spacing:-0.47px;">Basket</span>
<span class="a" style="left:1107px;top:67px;">Nett Price</span>
<span class="a" style="left:1172.5px;top:67px;letter-spacing:-0.29px;">Navigate</span>
<span class="a" style="left:1226.5px;top:67px;letter-spacing:-0.32px;">Close</span>
<span class="a" style="left:14.5px;top:774px;letter-spacing:-0.65px;">Summary</span>
<span class="a" style="left:67px;top:774px;letter-spacing:-0.26px;">Search</span>
<span class="a" style="left:107.5px;top:774px;letter-spacing:-0.11px;color:#fff">Acc 2A,1C MCO</span>
<span class="a" style="left:191.5px;top:774px;letter-spacing:-0.19px;">Car MCO</span>
<span class="a" style="left:242.5px;top:774px;letter-spacing:-0.44px;">Financial Summary</span>
</body></html>
